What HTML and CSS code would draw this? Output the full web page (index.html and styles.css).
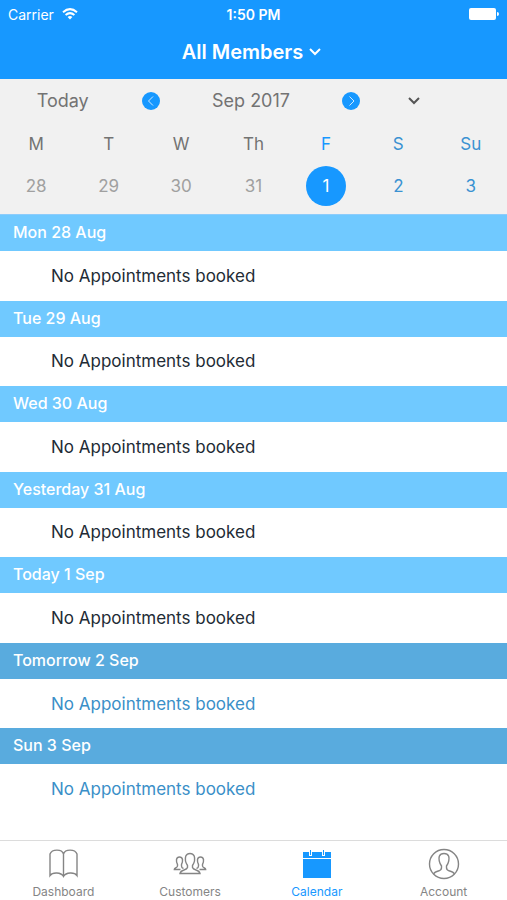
FILE: index.html
```html
<!DOCTYPE html>
<html lang="en">
<head>
<meta charset="utf-8">
<meta name="viewport" content="width=device-width, initial-scale=1">
<title>Calendar</title>
<link rel="stylesheet" href="styles.css">
</head>
<body>
<header class="header">
  <div class="status">
    <div class="carrier">Carrier
      <svg width="16" height="12" viewBox="0 0 16 12" fill="none" stroke="currentColor" stroke-width="2" aria-hidden="true"><path d="M1 4.3Q8-2 15 4.3M3.6 7Q8 3.2 12.4 7"/><path d="M8 11.4 5.6 8.9Q8 7 10.4 8.9Z" fill="currentColor" stroke="none"/></svg>
    </div>
    <div class="clock">1:50 PM</div>
    <div class="battery">
      <svg width="30" height="12" viewBox="0 0 30 12" fill="currentColor" aria-hidden="true"><rect width="27" height="12" rx="2"/><path d="M28 4q2 0 2 2t-2 2z"/></svg>
    </div>
  </div>
  <button class="members" type="button">All Members
    <svg width="12" height="8" viewBox="0 0 12 8" fill="none" stroke="currentColor" stroke-width="2" aria-hidden="true"><path d="m1 1 5 5 5-5"/></svg>
  </button>
</header>

<section class="calendar">
  <div class="month">
    <button class="today" type="button">Today</button>
    <button class="step" type="button" aria-label="Previous week"><svg width="18" height="18" viewBox="0 0 18 18" aria-hidden="true"><circle cx="9" cy="9" r="9"/><path d="m11 4.500-4.500 4.500 4.500 4.500"/></svg></button>
    <span class="month-name">Sep 2017</span>
    <button class="step" type="button" aria-label="Next week"><svg width="18" height="18" viewBox="0 0 18 18" aria-hidden="true"><circle cx="9" cy="9" r="9"/><path d="m7.500 4.500 4.500 4.500-4.500 4.500"/></svg></button>
    <button class="expand" type="button" aria-label="Show month"><svg width="12" height="8" viewBox="0 0 12 8" fill="none" stroke="currentColor" stroke-width="2" aria-hidden="true"><path d="m1 1 5 5 5-5"/></svg></button>
  </div>
  <table class="week">
    <thead>
      <tr><th>M</th><th>T</th><th>W</th><th>Th</th><th class="current">F</th><th class="future">S</th><th class="future">Su</th></tr>
    </thead>
    <tbody>
      <tr>
        <td><button type="button">28</button></td>
        <td><button type="button">29</button></td>
        <td><button type="button">30</button></td>
        <td><button type="button">31</button></td>
        <td><button type="button" class="selected">1</button></td>
        <td class="future"><button type="button">2</button></td>
        <td class="future"><button type="button">3</button></td>
      </tr>
    </tbody>
  </table>
</section>

<main class="agenda">
  <section class="day"><h2>Mon 28 Aug</h2><p>No Appointments booked</p></section>
  <section class="day"><h2>Tue 29 Aug</h2><p>No Appointments booked</p></section>
  <section class="day"><h2>Wed 30 Aug</h2><p>No Appointments booked</p></section>
  <section class="day"><h2>Yesterday 31 Aug</h2><p>No Appointments booked</p></section>
  <section class="day"><h2>Today 1 Sep</h2><p>No Appointments booked</p></section>
  <section class="day upcoming"><h2>Tomorrow 2 Sep</h2><p>No Appointments booked</p></section>
  <section class="day upcoming"><h2>Sun 3 Sep</h2><p>No Appointments booked</p></section>
</main>

<nav class="tabs">
  <a href="#dashboard">
    <svg width="34" height="32" viewBox="0 0 34 32" aria-hidden="true"><path d="M17.500 6C16 .8 6 .8 4 6V27.500C6.500 24 15 24 17.500 28.500 20 24 28.500 24 31 27.500V6C29 .8 19 .8 17.500 6ZM17.500 6V28.500"/></svg>
    Dashboard
  </a>
  <a href="#customers">
    <svg width="34" height="32" viewBox="0 0 34 32" aria-hidden="true"><path d="M14.500 19.500V17.500C12.500 14.500 12 10.500 12.800 8Q14 5.500 17 5.500T21.200 8C22 10.500 21.500 14.500 19.500 17.500V19.500Q20 21 23 22Q26.500 23 27 25.500H7Q7.500 23 11 22Q14 21 14.500 19.500Z"/><path d="M10.500 20.500Q8.500 20 8.500 18V16.500Q9.800 14.500 9.500 11.500 9 9 6.500 9T3.500 11.500Q3.200 14.500 4.500 16.500V18Q4.500 19 2.500 20 1.300 20.500 1.300 21.500H7.500"/><path d="M23.500 20.500Q25.500 20 25.500 18V16.500Q24.200 14.500 24.500 11.500 25 9 27.500 9T30.500 11.500Q30.800 14.500 29.500 16.500V18Q29.500 19 31.500 20 32.700 20.500 32.700 21.500H26.500"/></svg>
    Customers
  </a>
  <a href="#calendar" class="active" aria-current="page">
    <svg width="34" height="32" viewBox="0 0 34 32" aria-hidden="true"><path class="solid" d="M3 4H9V8H12V4H22V8H25V4H31V10H3ZM3 11H31V30H3ZM10 2H11V7H10ZM23 2H24V7H23Z"/></svg>
    Calendar
  </a>
  <a href="#account">
    <svg width="34" height="32" viewBox="0 0 34 32" aria-hidden="true"><circle cx="17" cy="16" r="14.500"/><path d="M6.500 26Q7.500 24 12 22.800Q14.500 22 14.500 19.500V18C12.200 15 11.500 10.500 12.300 8.200Q13.500 5.500 17 5.500T21.700 8.200C22.500 10.500 21.800 15 19.500 18V19.500Q19.500 22 22 22.800Q26.500 24 27.500 26"/></svg>
    Account
  </a>
</nav>
</body>
</html>
```
FILE: styles.css
```css
* { box-sizing: border-box; }

body {
  margin: 0;
  min-height: 100vh;
  display: flex;
  flex-direction: column;
  background: #fff;
  color: #222b35;
  font-family: Inter, "Liberation Sans", sans-serif;
}

button {
  border: 0;
  padding: 0;
  background: none;
  color: inherit;
  font: inherit;
}

svg { display: block; }

.header {
  background: #1798ff;
  color: #fff;
  padding-bottom: 13px;
}

.status {
  display: grid;
  grid-template-columns: 1fr auto 1fr;
  align-items: center;
  height: 28px;
  padding: 0 8px;
  font-size: 14px;
}

.carrier {
  display: flex;
  align-items: center;
  gap: 8px;
}

.clock { font-weight: 600; }
.battery { justify-self: end; }

.members {
  display: flex;
  align-items: center;
  gap: 6px;
  height: 38px;
  padding: 10px 4px 0 0;
  margin: 0 auto;
  font-size: 20px;
  font-weight: 600;
  line-height: 28px;
}

.calendar {
  background: #f1f1f1;
  color: #737373;
  border-bottom: 1px solid #8dccfb;
}

.month {
  display: grid;
  grid-template-columns: 25fr 10fr 30fr 10fr 15fr 11fr;
  align-items: center;
  justify-items: center;
  height: 43px;
  font-size: 18px;
}

.step circle { fill: #1798ff; }
.step path { fill: none; stroke: #cce9ff; }
.expand { color: #555; }

.week {
  width: 100%;
  table-layout: fixed;
  border-collapse: collapse;
  text-align: center;
  font-size: 17px;
}

.week th {
  height: 43px;
  padding: 0;
  font-weight: 400;
}

.week td {
  height: 49px;
  padding: 0 0 7px;
  color: #a0a0a0;
}

.week .current { color: #1798ff; }
.week .future { color: #3a92d2; }

.week button {
  width: 40px;
  height: 40px;
  border-radius: 50%;
}

.week .selected {
  background: #1798ff;
  color: #fff;
}

.agenda {
  flex: 1;
  display: grid;
  grid-auto-rows: 1fr;
  padding-bottom: 26px;
}

.day {
  display: flex;
  flex-direction: column;
}

.day h2 {
  margin: 0;
  padding: 0 13px 2px;
  background: #70c9ff;
  color: #fff;
  font-size: 16px;
  font-weight: 500;
  line-height: 34px;
}

.day p {
  flex: 1;
  display: flex;
  align-items: center;
  margin: 0;
  padding: 0 51px;
  font-size: 17px;
  line-height: 24px;
}

.upcoming h2 { background: #59abde; }
.upcoming p { color: #3a8fc8; }

.tabs {
  display: grid;
  grid-template-columns: repeat(4, 1fr);
  height: 60px;
  padding-top: 7px;
  border-top: 1px solid #dcdcdc;
}

.tabs a {
  display: flex;
  flex-direction: column;
  align-items: center;
  gap: 4px;
  color: #858585;
  font-size: 12px;
  line-height: 16px;
  text-decoration: none;
}

.tabs svg {
  fill: none;
  stroke: currentColor;
  stroke-width: 1.4;
}

.tabs .solid {
  fill: currentColor;
  stroke: none;
}

.tabs .active { color: #1798ff; }
```
